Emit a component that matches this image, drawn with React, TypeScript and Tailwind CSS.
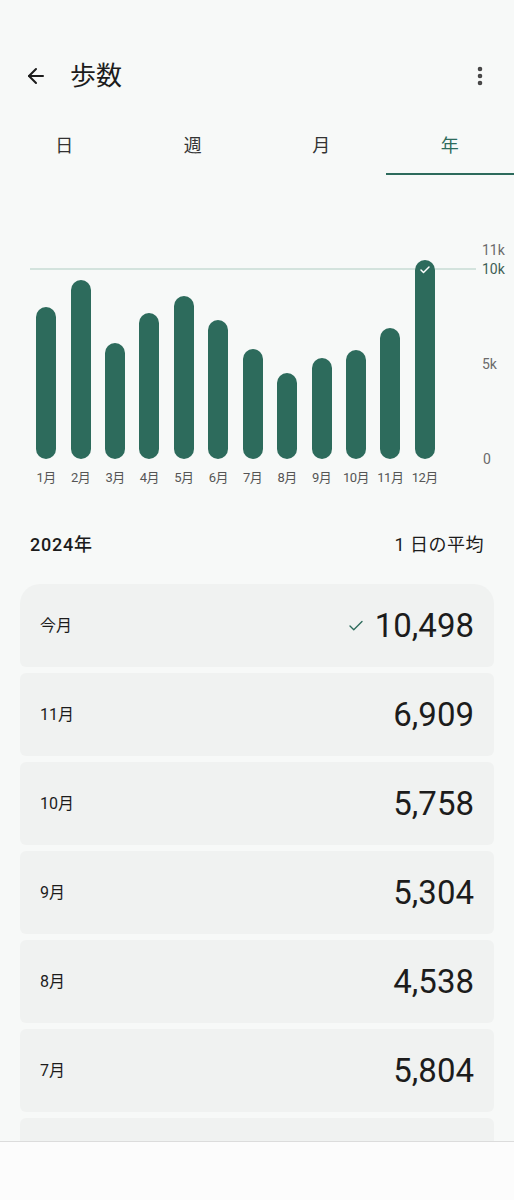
import { ArrowLeft, EllipsisVertical, Check } from 'lucide-react'

type MonthStat = { label: string; value: number }

const monthly: MonthStat[] = [
  { label: '1月', value: 8000 },
  { label: '2月', value: 9420 },
  { label: '3月', value: 6100 },
  { label: '4月', value: 7680 },
  { label: '5月', value: 8580 },
  { label: '6月', value: 7300 },
  { label: '7月', value: 5804 },
  { label: '8月', value: 4538 },
  { label: '9月', value: 5304 },
  { label: '10月', value: 5758 },
  { label: '11月', value: 6909 },
  { label: '12月', value: 10498 },
]

const rows = [
  { label: '今月', value: 10498, goal: true },
  { label: '11月', value: 6909 },
  { label: '10月', value: 5758 },
  { label: '9月', value: 5304 },
  { label: '8月', value: 4538 },
  { label: '7月', value: 5804 },
  { label: '6月', value: 7300 },
]

const tabs = ['日', '週', '月', '年']

// 19px per 1000 steps
const PX_PER_STEP = 0.019

export default function App() {
  return (
    <div
      className="min-h-[1200px] pt-[52px] bg-[#f7f9f8] text-[#1c1c1c]"
      style={{ fontFamily: 'Roboto, "Noto Sans CJK JP", sans-serif' }}
    >
      {/* Header */}
      <div className="flex items-center h-12 pl-6 pr-[22px]">
        <ArrowLeft className="w-6 h-6 text-[#1c1c1c]" strokeWidth={2} />
        <h1 className="ml-[22px] text-[26px] leading-none font-normal">歩数</h1>
        <div className="flex-1" />
        <EllipsisVertical className="w-6 h-6 text-[#444]" strokeWidth={2.6} />
      </div>

      {/* Tabs */}
      <div className="grid grid-cols-4 mt-[15px] h-[60px]">
        {tabs.map((t, i) => (
          <div key={t} className="relative flex items-center justify-center">
            <span className={`text-[18px] ${i === 3 ? 'text-[#2d6b5c]' : 'text-[#333]'}`}>{t}</span>
            {i === 3 && <div className="absolute left-0 right-0 bottom-0 h-[2px] bg-[#2d6b5c]" />}
          </div>
        ))}
      </div>

      {/* Chart */}
      <div className="relative flex mt-[75px] pl-[29px]">
        <div className="absolute left-[30px] w-[446px] top-[18px] h-[2px] bg-[#d3e3dd]" />
        <div className="grid grid-cols-12 w-[413px] h-[209px] items-end">
          {monthly.map((m, i) => (
            <div key={m.label} className="flex justify-center">
              <div
                className="relative z-10 w-5 rounded-full bg-[#2d6b5c] flex justify-center"
                style={{ height: `${Math.round(m.value * PX_PER_STEP)}px` }}
              >
                {i === 11 && <Check className="w-3 h-3 mt-[4px] text-white" strokeWidth={3} />}
              </div>
            </div>
          ))}
        </div>
        <div className="relative ml-[40px] w-8 h-[209px] text-[14px] leading-none text-[#6b6b6b]">
          <span className="absolute top-[-7px] left-0">11k</span>
          <span className="absolute top-[12px] left-0 text-[#3f5f56]">10k</span>
          <span className="absolute top-[107px] left-0">5k</span>
          <span className="absolute top-[202px] left-[1px]">0</span>
        </div>
      </div>
      <div className="grid grid-cols-12 w-[413px] ml-[29px] mt-[11px]">
        {monthly.map(m => (
          <span key={m.label} className="text-center text-[13px] leading-4 text-[#555] tracking-[-0.5px]">
            {m.label}
          </span>
        ))}
      </div>

      {/* Summary header */}
      <div className="flex items-center justify-between mt-[46px] px-[30px] h-6">
        <span className="text-[18px] font-medium tracking-[0.8px] text-[#1c1c1c]">2024年</span>
        <span className="text-[18px] tracking-[0.5px] text-[#1c1c1c]">1 日の平均</span>
      </div>

      {/* List */}
      <div className="flex flex-col gap-[6px] mt-[28px] px-5">
        {rows.map((r, i) => (
          <div
            key={r.label}
            className={`flex items-center justify-between h-[83px] px-5 bg-[#f0f2f1] ${
              i === 0 ? 'rounded-t-[20px] rounded-b-[6px]' : 'rounded-[6px]'
            }`}
          >
            <span className="text-[16px] text-[#1c1c1c]">{r.label}</span>
            <div className="flex items-center gap-[10px]">
              {r.goal && <Check className="w-[18px] h-[18px] text-[#2d6b5c]" strokeWidth={1.8} />}
              <span className="text-[33px] leading-none font-normal text-[#1c1c1c]">
                {r.value.toLocaleString('en-US')}
              </span>
            </div>
          </div>
        ))}
      </div>

      {/* Bottom bar */}
      <div className="fixed left-0 right-0 bottom-0 h-[59px] bg-[#fcfcfc] border-t border-[#dcdcdc]" />
    </div>
  )
}
